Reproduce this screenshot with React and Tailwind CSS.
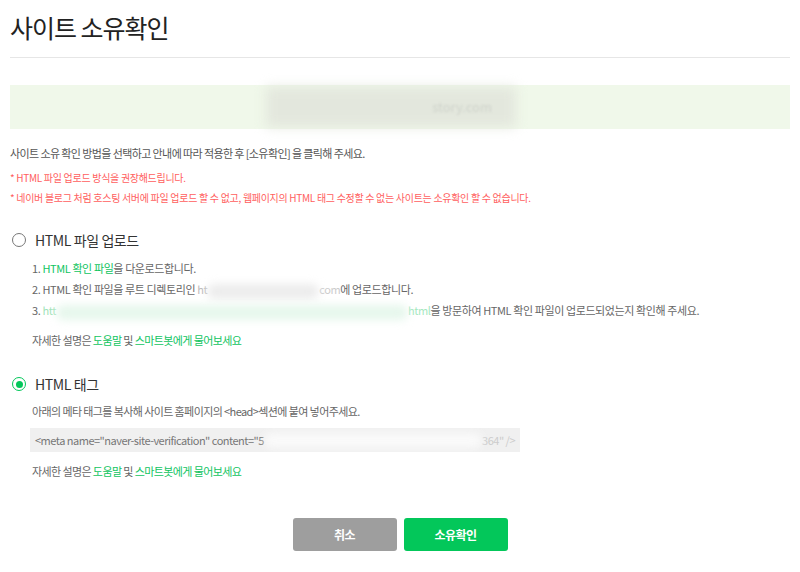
import React, { useState } from 'react';

const font = { fontFamily: '"Noto Sans CJK KR", "Noto Sans", sans-serif' };

const Radio = ({ checked }) => (
  <span
    className={`w-[14px] h-[14px] rounded-full flex items-center justify-center border-[1.5px] ${
      checked ? 'border-[#03c75a]' : 'border-[#777]'
    }`}
  >
    {checked && <span className="w-[7px] h-[7px] rounded-full bg-[#03c75a]" />}
  </span>
);

const Haze = ({ w, tone = 'bg-[#ececec]' }) => (
  <span className={`inline-block h-[15px] align-middle ${w} ${tone} blur-[4px] rounded-full`} />
);

const HelpLine = () => (
  <p className="ml-[22px] text-[11px] leading-[16px] text-[#666] tracking-[-0.6px]">
    자세한 설명은 <a className="text-[#10c45f]">도움말</a> 및{' '}
    <a className="text-[#10c45f]">스마트봇에게 물어보세요</a>
  </p>
);

export default function App() {
  const [method, setMethod] = useState('tag');

  return (
    <div className="w-[800px] h-[572px] bg-white px-[10px] overflow-hidden" style={font}>
      <h1 className="pt-[11px] h-[43px] text-[25px] leading-[32px] text-[#222] tracking-[-1px] font-normal">
        사이트 소유확인
      </h1>
      <div className="mt-[14px] border-b border-[#e6e6e6]" />

      <div className="mt-[27px] h-[44px] bg-[#f0f8ea] flex items-center justify-center">
        <span className="relative ml-[-18px] w-[250px] h-[40px] flex items-center justify-end pr-[24px]">
          <span className="absolute inset-0 bg-[#e3e7dd] blur-[6px]" />
          <span className="relative text-[13px] text-[#cfd3cb] blur-[1px]">story.com</span>
        </span>
      </div>

      <p className="mt-[16px] text-[11px] leading-[16px] text-[#555] tracking-[-0.6px]">
        사이트 소유 확인 방법을 선택하고 안내에 따라 적용한 후 [소유확인] 을 클릭해 주세요.
      </p>
      <p className="mt-[10px] text-[10px] leading-[14px] text-[#ff5e5e] tracking-[-0.3px]">
        * HTML 파일 업로드 방식을 권장해드립니다.
      </p>
      <p className="mt-[6px] text-[10px] leading-[14px] text-[#ff5e5e] tracking-[-0.3px]">
        * 네이버 블로그 처럼 호스팅 서버에 파일 업로드 할 수 없고, 웹페이지의 HTML 태그 수정할 수 없는 사이트는 소유확인 할 수 없습니다.
      </p>

      <label
        className="mt-[25px] h-[20px] flex items-center gap-[9px] ml-[2px] cursor-pointer"
        onClick={() => setMethod('file')}
      >
        <Radio checked={method === 'file'} />
        <span className="text-[14px] text-[#333] tracking-[-0.4px]">HTML 파일 업로드</span>
      </label>

      <ol className="mt-[8px] ml-[22px] text-[11px] leading-[21px] text-[#666] tracking-[-0.4px]">
        <li>
          1. <a className="text-[#10c45f]">HTML 확인 파일</a>을 다운로드합니다.
        </li>
        <li className="whitespace-nowrap">
          2. HTML 확인 파일을 루트 디렉토리인 <span className="text-[#bbb]">ht</span>
          <Haze w="w-[112px]" />
          <span className="text-[#ccc]">com</span>에 업로드합니다.
        </li>
        <li className="whitespace-nowrap">
          3. <span className="text-[#9fe3b9]">htt</span>
          <Haze w="w-[352px]" tone="bg-[#e6f7ec]" />
          <span className="text-[#a6e8bf]">html</span>을 방문하여 HTML 확인 파일이 업로드되었는지 확인해 주세요.
        </li>
      </ol>

      <div className="mt-[11px]">
        <HelpLine />
      </div>

      <label
        className="mt-[26px] h-[20px] flex items-center gap-[9px] ml-[2px] cursor-pointer"
        onClick={() => setMethod('tag')}
      >
        <Radio checked={method === 'tag'} />
        <span className="text-[14px] text-[#333] tracking-[-0.4px]">HTML 태그</span>
      </label>

      <p className="mt-[9px] ml-[22px] text-[11px] leading-[16px] text-[#666] tracking-[-0.6px]">
        아래의 메타 태그를 복사해 사이트 홈페이지의 &lt;head&gt;섹션에 붙여 넣어주세요.
      </p>

      <div className="mt-[9px] ml-[20px] w-[490px] h-[24px] bg-[#f0f0f0] flex items-center px-[5px] text-[11px] text-[#777] tracking-[-0.5px] whitespace-pre overflow-hidden">
        <span>&lt;meta name="naver-site-verification" content="5</span>
        <Haze w="w-[235px]" tone="bg-[#fafafa]" />
        <span className="text-[#ccc]">364" /&gt;</span>
      </div>

      <div className="mt-[11px]">
        <HelpLine />
      </div>

      <div className="mt-[39px] flex justify-center gap-[7px]">
        <button className="w-[104px] h-[33px] rounded-[3px] bg-[#9e9e9e] text-white text-[12px] font-bold tracking-[-0.5px]">
          취소
        </button>
        <button className="w-[104px] h-[33px] rounded-[3px] bg-[#03c75a] text-white text-[12px] font-bold tracking-[-0.5px]">
          소유확인
        </button>
      </div>
    </div>
  );
}
